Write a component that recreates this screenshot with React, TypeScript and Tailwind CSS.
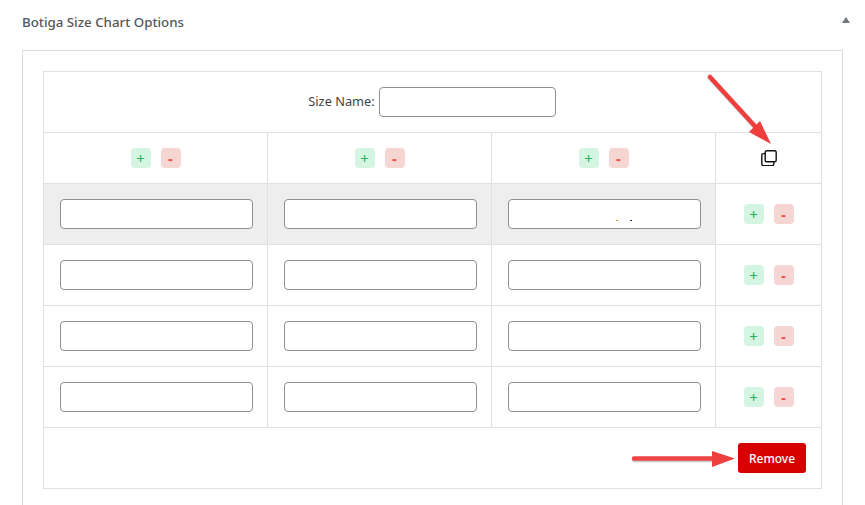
import React from 'react';

const font = { fontFamily: '"Noto Sans", "Open Sans", sans-serif' };

const PlusMinus = () => (
  <div className="flex items-center justify-center gap-[10px]">
    <span className="flex h-5 w-5 items-center justify-center rounded-[4px] bg-[#d5f5e3] text-[15px] leading-none text-[#27ae60]">+</span>
    <span className="flex h-5 w-5 items-center justify-center rounded-[4px] bg-[#f5d6d3] pt-px text-[14px] font-bold leading-none text-[#f0483a]">-</span>
  </div>
);

const TextBox = () => (
  <input type="text" className="h-[30px] w-[193px] rounded-[4px] border border-[#8c8f94] bg-white" />
);

const Row = ({ shaded, specks }: { shaded?: boolean; specks?: boolean }) => (
  <div className="flex h-[61px] border-b border-[#e0e0e0]">
    {[0, 1, 2].map((i) => (
      <div key={i} className={`flex w-[224px] items-center justify-center border-r border-[#e0e0e0] pl-[2px] ${shaded ? 'bg-[#eeeeee]' : ''}`}>
        <div className="relative flex">
          <TextBox />
          {specks && i === 2 && (
            <>
              <span className="absolute left-[108px] top-[21px] h-px w-[2px] bg-[#d9a020]" />
              <span className="absolute left-[122px] top-[21px] h-px w-[2px] bg-[#1a2fa0]" />
            </>
          )}
        </div>
      </div>
    ))}
    <div className="flex flex-1 items-center justify-center">
      <PlusMinus />
    </div>
  </div>
);

export default function App() {
  return (
    <div className="h-[505px] w-[865px] overflow-hidden bg-white" style={font}>
      <div className="flex h-[50px] items-start justify-between pl-[22px] pr-[15px] pt-[13px]">
        <h2 className="text-[13.3px] font-medium leading-[18px] text-[#50575e]">Botiga Size Chart Options</h2>
        <span className="mt-[4px] h-0 w-0 border-x-[4px] border-b-[6px] border-x-transparent border-b-[#72777c]" />
      </div>
      <div className="ml-[22px] h-[480px] w-[821px] border border-[#dcdcde] px-5 pt-5">
        <div className="w-[779px] border border-b-0 border-[#e0e0e0]">
          <div className="flex h-[61px] items-center justify-center gap-[4px] border-b border-[#e0e0e0] pr-px">
            <label className="text-[12.8px] text-[#3c434a]">Size Name:</label>
            <input type="text" className="h-[30px] w-[177px] rounded-[4px] border border-[#8c8f94] bg-white" />
          </div>
          <div className="flex h-[51px] border-b border-[#e0e0e0]">
            {[0, 1, 2].map((i) => (
              <div key={i} className="flex w-[224px] items-center justify-center border-r border-[#e0e0e0]">
                <PlusMinus />
              </div>
            ))}
            <div className="flex flex-1 items-center justify-center">
              <svg width="16" height="16" viewBox="0 0 16 16" fill="none" stroke="#111" strokeWidth="1.4">
                <rect x="4.2" y="0.8" width="11" height="11" rx="1.5" />
                <path d="M4 3.6H2.3A1.5 1.5 0 0 0 .8 5.1v9a1.5 1.5 0 0 0 1.5 1.5h9a1.5 1.5 0 0 0 1.5-1.5V12" />
              </svg>
            </div>
          </div>
          <Row shaded specks />
          <Row />
          <Row />
          <Row />
          <div className="flex h-[61px] items-center justify-end border-b border-[#e0e0e0] pr-[15px]">
            <button className="h-[30px] w-[68px] rounded-[3px] bg-[#d60000] pt-px text-[12px] font-medium text-white">Remove</button>
          </div>
        </div>
      </div>
      {/* annotation arrows drawn over the screenshot */}
      <svg className="pointer-events-none absolute left-0 top-0" width="865" height="505" fill="none">
        <path d="M710 78 L763 136" stroke="#9a9a9a" strokeOpacity="0.5" strokeWidth="4.500" strokeLinecap="round" />
        <path d="M710 77 L763 135" stroke="#ef3e3e" strokeWidth="4.500" strokeLinecap="round" />
        <path d="M771 144 L760 121 L749 132 Z" fill="#ef3e3e" />
        <path d="M634 460 L716 460" stroke="#9a9a9a" strokeOpacity="0.5" strokeWidth="4.500" strokeLinecap="round" />
        <path d="M634 458.500 L716 458.500" stroke="#ef4444" strokeWidth="4.500" strokeLinecap="round" />
        <path d="M735 458.500 L712 451 L712 467 Z" fill="#ef3e3e" />
      </svg>
    </div>
  );
}
